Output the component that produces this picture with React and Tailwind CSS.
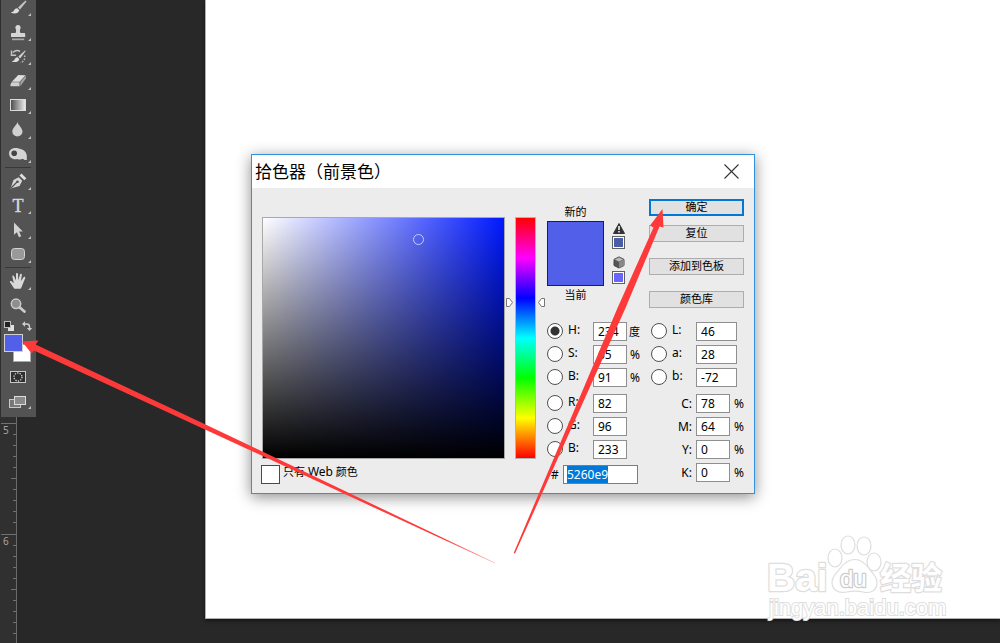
import React, { useEffect, useRef, useState } from 'react';

const brushTools = [
  {
    name: 'Brush',
    draw: (
      <>
        <path d="M16.5 1.5 9 8.5l2 2L17.500 2.500z" fill="#c4c4c4" />
        <path d="M8.300 9.200c-2 0-2.800 1-3.300 2.400-.5 1.100-1.600 1.600-3.300 1.600 3 2 7.600 1.600 8.600-2z" fill="#dedede" />
      </>
    ),
  },
  {
    name: 'Clone Stamp',
    draw: (
      <>
        <path d="M9 1a2.600 2.600 0 0 1 2.300 3.900c-.6 1.100-.6 2.500.2 4.100H15c.8 0 1.200.5 1.200 1.200V13H2v-2.800C2 9.500 2.400 9 3.100 9h3.400c.8-1.600.8-3 .2-4.100A2.600 2.600 0 0 1 9 1z" fill="#d6d6d6" />
        <path d="M3 14.500h12.200v1.700H3z" fill="#a9a9a9" />
      </>
    ),
  },
  {
    name: 'History Brush',
    draw: (
      <>
        <path d="M16 2.500 9.300 8.600l1.800 1.800L16.700 3z" fill="#d0d0d0" />
        <path d="M8.700 9.300c-2 .1-2.600 1.200-3.100 2.300-.5 1-1.600 1.500-3 1.600 2.800 1.600 6.900 1 7.700-2z" fill="#dedede" />
        <path d="M4 4.500C6 2.500 9 2.300 11 3.500M2.500 2.500v4.800h4.600" fill="none" stroke="#c4c4c4" strokeWidth="1.500" />
        <path d="M15.500 7.500c1 3-.5 6-4 7.300" fill="none" stroke="#bdbdbd" strokeWidth="1.500" strokeDasharray="1.500 1.500" />
      </>
    ),
  },
  {
    name: 'Eraser',
    draw: (
      <>
        <path d="m9.300 3 7.200.2-5.800 6.600-7.900-.1z" fill="#dedede" />
        <path d="M2.500 10.300h8v4H2.300c-.8 0-1-.5-1-1.200z" fill="#cfcfcf" />
        <path d="m11.300 10 5.600-6.400v3l-5.600 7.600z" fill="#a2a2a2" />
      </>
    ),
  },
  {
    name: 'Gradient',
    draw: (
      <>
        <defs>
          <linearGradient id="toolGradient">
            <stop offset="0" stopColor="#4a4a4a" />
            <stop offset="1" stopColor="#f0f0f0" />
          </linearGradient>
        </defs>
        <rect x="1.500" y="2.500" width="15" height="11" fill="url(#toolGradient)" stroke="#dcdcdc" />
      </>
    ),
  },
  {
    name: 'Blur',
    draw: <path d="M8.500 1c.4 2.800 5 6 5 9.600a5 4.800 0 0 1-10.200 0C3.300 7 8 3.800 8.500 1z" fill="#d0d0d0" />,
  },
  {
    name: 'Sponge',
    draw: (
      <>
        <path d="M0 7C.5 3 4 1.500 8 2l4.500 1.200c3.200 1 5 3.300 5.300 6.600v4.200c-1.500.3-3-.3-4-1.200-1.500.8-3.500 1-5.300.2C4 14 0 12 0 7z" fill="#d4d4d4" />
        <circle cx="5.200" cy="7.300" r="2.800" fill="#444444" />
      </>
    ),
  },
];

const pathTools = [
  {
    name: 'Pen',
    draw: (
      <>
        <path d="M1.500 16.500 4.500 8l5.200-2.700 3.500 3.500-2.600 5.100z" fill="#d6d6d6" />
        <path d="m10.500 3.500 2-2 4.800 4.800-2 2z" fill="#dedede" />
        <path d="m2 16 6-6" stroke="#535353" strokeWidth="1.200" />
        <circle cx="8.500" cy="9.800" r="1.300" fill="#535353" />
      </>
    ),
  },
  {
    name: 'Type',
    draw: (
      <text x="9" y="15" textAnchor="middle" fontSize="18" fontFamily="Liberation Serif, serif" fill="#d8d8d8" stroke="#d8d8d8" strokeWidth="0.400">
        T
      </text>
    ),
  },
  {
    name: 'Path Selection',
    draw: <path d="M5 1.500v12.300l2.900-2.600 2 5 2.300-1-2.100-4.700h3.700z" fill="#d2d2d2" />,
  },
  {
    name: 'Rounded Rectangle',
    draw: <rect x="2.500" y="2.500" width="13" height="11" rx="3" fill="#999999" stroke="#d4d4d4" />,
  },
];

const viewTools = [
  {
    name: 'Hand',
    draw: (
      <path
        d="M5.300 16.800 1 10.300c-.6-1.200.8-1.900 1.600-1l2.200 2L3.300 4.600c-.2-1.300 1.400-1.600 1.800-.4L7 8.500V2c0-1.300 1.900-1.300 2 0l.3 6.200L11 2.500c.4-1.200 2.100-.8 1.900.5l-1.100 6.200 2.800-3.900c.7-1 2.200-.2 1.600 1l-2.600 6.200c-.4 1.400-1.200 2.900-2 4.300z"
        fill="#d8d8d8"
      />
    ),
    corner: true,
  },
  {
    name: 'Zoom',
    draw: (
      <>
        <circle cx="7" cy="6.800" r="4.700" fill="#8e8e8e" stroke="#c9c9c9" strokeWidth="1.500" />
        <path d="m10.800 10.500 4.600 4" stroke="#cccccc" strokeWidth="2.800" strokeLinecap="round" />
      </>
    ),
    corner: false,
  },
];

const leftFields = [
  [
    { id: 'h', label: 'H:', value: '234', unit: '度' },
    { id: 's', label: 'S:', value: '65', unit: '%' },
    { id: 'v', label: 'B:', value: '91', unit: '%' },
  ],
  [
    { id: 'r', label: 'R:', value: '82' },
    { id: 'g', label: 'G:', value: '96' },
    { id: 'bl', label: 'B:', value: '233' },
  ],
];

const labFields = [
  { id: 'l', label: 'L:', value: '46' },
  { id: 'a', label: 'a:', value: '28' },
  { id: 'b', label: 'b:', value: '-72' },
];

const cmykFields = [
  { id: 'c', label: 'C:', value: '78' },
  { id: 'm', label: 'M:', value: '64' },
  { id: 'y', label: 'Y:', value: '0' },
  { id: 'k', label: 'K:', value: '0' },
];

const ToolButton = ({ tool, corner = true }) => (
  <button type="button" aria-label={tool.name} className="relative flex items-center justify-center w-full">
    <svg width="18" height="18" viewBox="0 0 18 18" className="overflow-visible">{tool.draw}</svg>
    {corner && (
      <svg width="3" height="3" viewBox="0 0 3 3" className="absolute right-1 bottom-1">
        <path d="M3 0v3H0z" fill="#c0c0c0" />
      </svg>
    )}
  </button>
);

const Toolbar = () => (
  <div className="bg-[#535353] border-l border-[#2e2e2e] overflow-hidden w-[36px] pr-px pb-1">
    <div className="grid auto-rows-fr h-[171px] -mt-1">
      {brushTools.map((tool) => <ToolButton key={tool.name} tool={tool} />)}
    </div>
    <div className="h-px mx-1 bg-[#383838] mb-px" />
    <div className="grid auto-rows-fr h-[98px]">
      {pathTools.map((tool) => <ToolButton key={tool.name} tool={tool} />)}
    </div>
    <div className="h-px mx-1 bg-[#383838] mb-px" />
    <div className="grid auto-rows-fr h-[49px]">
      {viewTools.map((tool) => <ToolButton key={tool.name} tool={tool} corner={tool.corner} />)}
    </div>

    {/* Default / swap colors */}
    <div className="flex gap-2 pl-[3px] h-4 items-center">
      <button type="button" aria-label="Default colors">
        <svg width="10" height="10" viewBox="0 0 10 10">
          <rect x="4" y="4" width="6" height="6" fill="#e0e0e0" />
          <rect x="0.500" y="0.500" width="6" height="6" fill="#222222" stroke="#bdbdbd" />
        </svg>
      </button>
      <button type="button" aria-label="Swap colors">
        <svg width="10" height="10" viewBox="0 0 10 10">
          <path d="M2.500 3h2.300Q7.500 3 7.500 5.700v1.500" fill="none" stroke="#cfcfcf" strokeWidth="1.400" />
          <path d="M0 3 3 .3v5.400zM7.500 10 4.800 7h5.400z" fill="#cfcfcf" />
        </svg>
      </button>
    </div>

    {/* Foreground and background */}
    <div className="grid h-[28px] ml-[3px] mr-1">
      <button type="button" aria-label="Background color" className="col-start-1 row-start-1 justify-self-end self-end w-[18px] h-[18px] bg-white border border-[#aaaaaa]" />
      <button type="button" aria-label="Foreground color" className="col-start-1 row-start-1 w-[19px] h-[18px] z-10 bg-[#5260e9] border border-[#d0d0d0]" />
    </div>

    <button type="button" aria-label="Quick Mask" className="flex items-center justify-center w-full h-[29px]">
      <svg width="18" height="14" viewBox="0 0 18 14">
        <rect x="1.500" y="1.500" width="15" height="11" fill="#303030" stroke="#c8c8c8" />
        <circle cx="9" cy="7" r="4" fill="none" stroke="#d8d8d8" strokeWidth="1.300" strokeDasharray="1.300 1.200" />
      </svg>
    </button>
    <div className="grid h-[22px]">
      <ToolButton
        tool={{
          name: 'Screen Mode',
          draw: (
            <>
              <rect x="0.500" y="6.500" width="11" height="8" fill="#777777" stroke="#c8c8c8" />
              <rect x="5.500" y="3.500" width="11" height="8" fill="#8a8a8a" stroke="#dddddd" />
            </>
          ),
        }}
      />
    </div>
  </div>
);

const Ruler = () => {
  const ticks = Array.from({ length: 22 }, (_, i) => i);
  return (
    <div className="relative flex-1 w-[17px] bg-[#303030] border-r border-[#6a6a6a] overflow-hidden">
      <svg width="16" height="100%" className="absolute inset-0" shapeRendering="crispEdges">
        {ticks.map((i) => (
          <path
            key={i}
            d={`M${i % 10 === 0 ? 1 : i % 5 === 0 ? 11 : 13} ${Math.round(6 + i * 11.05) + 0.5}H16`}
            stroke="#707070"
          />
        ))}
        <text x="3" y="17" fontSize="10" fontFamily="Noto Sans, sans-serif" fill="#a5a5a5">5</text>
        <text x="3" y="128" fontSize="10" fontFamily="Noto Sans, sans-serif" fill="#a5a5a5">6</text>
      </svg>
    </div>
  );
};

const Radio = ({ id, checked, onChange }) => (
  <input
    type="radio"
    name="channel"
    id={`radio-${id}`}
    aria-label={id}
    checked={checked}
    onChange={onChange}
    className="appearance-none shrink-0 w-4 h-4 mb-[2px] rounded-full border border-[#505050] bg-white checked:bg-[radial-gradient(circle,#333_4px,#fff_5px)]"
  />
);

const NumberBox = ({ id, value, width }) => (
  <input
    type="text"
    id={id}
    defaultValue={value}
    className={`${width} h-[19px] pl-1 bg-white border border-[#8f8f8f] outline-none`}
  />
);

const DialogButton = ({ children, primary }) => (
  <button
    type="button"
    className={`w-[95px] h-[17px] flex items-center justify-center text-[11px] bg-[#e1e1e1] ${
      primary ? 'border-2 border-[#0078d7]' : 'border border-[#adadad]'
    }`}
  >
    {children}
  </button>
);

const ColorPickerDialog = () => {
  const [channel, setChannel] = useState('h');
  const hexRef = useRef(null);

  useEffect(() => {
    hexRef.current.focus();
    hexRef.current.select();
  }, []);

  return (
    <div
      role="dialog"
      aria-labelledby="picker-title"
      className="w-max bg-[#ececec] border border-[#3291dc] shadow-[0_3px_14px_rgba(0,0,0,0.45)] text-black"
    >
      <div className="flex items-center justify-between h-[33px] bg-white pl-[3px] pr-[15px]">
        <h1 id="picker-title" className="text-[17px] leading-6">拾色器（前景色）</h1>
        <button type="button" aria-label="Close">
          <svg width="15" height="15" viewBox="0 0 15 15">
            <path d="m.5.5 14 14m0-14-14 14" stroke="#333333" strokeWidth="1.100" />
          </svg>
        </button>
      </div>

      <div className="flex px-[10px] pb-[9px]">
        {/* Color field and hue bar */}
        <div className="pt-[29px]">
          <div className="flex">
            <div className="relative w-[243px] h-[242px] border border-[#a8a8a8] bg-[linear-gradient(to_top,#000,transparent),linear-gradient(to_right,#fff,#0019ff)]">
              <span className="absolute left-[150px] top-4 w-[11px] h-[11px] rounded-full border border-[#c6caff]" />
            </div>
            <div className="relative ml-[10px] w-[21px] h-[242px] border border-[#b4b4b4] bg-[linear-gradient(to_bottom,#f00,#f0f,#00f,#0ff,#0f0,#ff0,#f00)]">
              <svg width="39" height="9" viewBox="0 0 39 9" className="absolute -left-[10px] top-[80px] max-w-none">
                <path d="M.5.5h3l3 4-3 4h-3zM38.500.5h-3l-3 4 3 4h3z" fill="#ffffff" stroke="#777777" />
              </svg>
            </div>
          </div>
          <div className="flex items-center mt-[5px] -ml-px">
            <input type="checkbox" id="web-only" className="appearance-none w-[19px] h-[19px] bg-white border border-[#4a4a4a] checked:bg-[#0078d7]" />
            <label htmlFor="web-only" className="ml-[3px] text-[11px] leading-4 pb-1">只有 <span className="text-[12px]">Web</span> 颜色</label>
          </div>
        </div>

        <div className="ml-[11px] pt-[11px]">
          <div className="flex h-[110px]">
            <div className="flex flex-col items-center w-[57px] text-[11px] leading-4 pt-[5px]">
              <span>新的</span>
              <div className="w-[57px] h-[65px] bg-[#5260e9] border border-[#222222] my-px" />
              <span>当前</span>
            </div>
            <div className="flex flex-col items-center w-[13px] ml-2 pt-6">
              <svg width="12" height="11" viewBox="0 0 12 11">
                <path d="M6 .5 11.500 10.500H.5z" fill="#333333" stroke="#333333" strokeLinejoin="round" />
                <path d="M6 3v4M6 8v1.500" stroke="#ffffff" strokeWidth="1.500" />
              </svg>
              <button type="button" aria-label="Gamut color" className="w-[13px] h-[13px] mt-[2px] bg-[#4a5da8] border border-[#606060] outline outline-white -outline-offset-2" />
              <svg width="12" height="13" viewBox="0 0 12 13" className="mt-[7px]">
                <path d="M6 1 11 3.500v6L6 12 1 9.500v-6z" fill="#555555" stroke="#444444" />
                <path d="M6 1 11 3.500 6 6 1 3.500z" fill="#bbbbbb" stroke="#555555" strokeWidth="0.700" />
                <path d="M6 6v6l5-2.500v-6z" fill="#888888" />
              </svg>
              <button type="button" aria-label="Web safe color" className="w-[13px] h-[13px] mt-[2px] bg-[#6666ff] border border-[#606060] outline outline-white -outline-offset-2" />
            </div>
            <div className="flex flex-col ml-6">
              <DialogButton primary>确定</DialogButton>
              <div className="flex flex-col mt-[9px] gap-4">
                <DialogButton>复位</DialogButton>
                <DialogButton>添加到色板</DialogButton>
                <DialogButton>颜色库</DialogButton>
              </div>
            </div>
          </div>

          <div className="flex mt-[13px] text-[12px] leading-4">
            <div className="flex flex-col gap-[7px]">
              {leftFields.map((group, i) => (
                <div key={i} className="flex flex-col gap-1">
                  {group.map((field) => (
                    <div key={field.id} className="flex items-center h-[19px]">
                      <Radio id={field.id} checked={channel === field.id} onChange={() => setChannel(field.id)} />
                      <label htmlFor={`field-${field.id}`} className="w-[25px] ml-[5px] pb-[3px]">{field.label}</label>
                      <NumberBox id={`field-${field.id}`} value={field.value} width="w-[34px]" />
                      {field.unit && (
                        <span className={field.unit === '%' ? 'ml-[3px]' : 'ml-[2px] text-[11px]'}>{field.unit}</span>
                      )}
                    </div>
                  ))}
                </div>
              ))}
              <div className="flex items-center pl-1 -mt-px">
                <label htmlFor="hex" className="w-3">#</label>
                <input
                  ref={hexRef}
                  id="hex"
                  type="text"
                  defaultValue="5260e9"
                  className="w-[75px] h-[19px] pl-[3px] bg-white border border-[#2f8fe0] outline-none selection:bg-[#0078d7] selection:text-white"
                />
              </div>
            </div>

            <div className="flex flex-col gap-[7px] ml-auto">
              <div className="flex flex-col gap-1">
                {labFields.map((field) => (
                  <div key={field.id} className="flex items-center h-[19px]">
                    <Radio id={field.id} checked={channel === field.id} onChange={() => setChannel(field.id)} />
                    <label htmlFor={`field-${field.id}`} className="w-[29px] pl-[5px] pb-[3px]">{field.label}</label>
                    <NumberBox id={`field-${field.id}`} value={field.value} width="w-[41px]" />
                  </div>
                ))}
              </div>
              <div className="flex flex-col gap-1">
                {cmykFields.map((field) => (
                  <div key={field.id} className="flex items-center h-[19px]">
                    <label htmlFor={`field-${field.id}`} className="w-[45px] pr-1 text-right">{field.label}</label>
                    <NumberBox id={`field-${field.id}`} value={field.value} width="w-[34px]" />
                    <span className="ml-1">%</span>
                  </div>
                ))}
              </div>
            </div>
          </div>
        </div>
      </div>
    </div>
  );
};

const Watermark = () => (
  <svg width="184" height="92" viewBox="0 0 184 92" className="absolute right-[52px] bottom-[17px]" aria-label="Baidu">
    <g fill="#ffffff" stroke="#dedede" strokeWidth="1.200">
      <ellipse cx="71" cy="24" rx="7" ry="9" />
      <ellipse cx="84" cy="11" rx="7" ry="9" />
      <ellipse cx="100" cy="12" rx="7" ry="9" />
      <ellipse cx="110" cy="28" rx="7" ry="9" />
      <path d="M91 25.500c7 0 11 5 14 9 4 6 8 8 8 14 0 9-8 11-14 9.500-5-1-11-1-16 0-7 1.500-15-1-15-9.500 0-6 4-8 8-14 3-4 8-9 15-9z" />
      <g paintOrder="stroke" strokeWidth="2.500" strokeLinejoin="round" fontFamily="Liberation Sans, Noto Sans CJK SC, sans-serif" fontWeight="700">
        <text x="3" y="57" fontSize="39">Bai</text>
        <text x="76" y="53" fontSize="24" fontWeight="400" stroke="#cccccc">du</text>
        <text x="116" y="55" fontSize="31">经验</text>
      </g>
      <text x="5" y="81" fontSize="22" fontFamily="Liberation Sans, sans-serif" paintOrder="stroke" strokeWidth="2">
        jingyan.baidu.com
      </text>
    </g>
  </svg>
);

const Arrows = () => (
  <svg width="1000" height="643" viewBox="0 0 1000 643" className="absolute left-0 top-0 z-20 pointer-events-none max-w-none">
    <defs>
      <linearGradient id="tailFade" gradientUnits="userSpaceOnUse" x1="440" y1="540" x2="495" y2="563">
        <stop offset="0" stopColor="#fd3a39" />
        <stop offset="1" stopColor="#fd3a39" stopOpacity="0.450" />
      </linearGradient>
    </defs>
    <path d="M22 341.500 38.500 340.500l-3 4L205 424.200l290 138.500-.2.600L205 429.500 34 350.500l-2.500 3z" fill="url(#tailFade)" />
    <path d="m662.500 209 1 18.500-4-1L625.500 308 515 553.500l-1.300-.6L617.500 308l36-80.500-3.500-2z" fill="#fd3a39" />
  </svg>
);

export default function App() {
  return (
    <div className="relative flex min-h-screen overflow-hidden bg-[#282828] font-['Noto_Sans','Noto_Sans_CJK_SC',sans-serif]">
      <aside className="flex flex-col w-[205px] shrink-0">
        <Toolbar />
        <Ruler />
      </aside>

      <main className="flex-1 flex pb-6">
        <div className="flex-1 bg-white pt-[154px] pl-[45px] border-l border-b border-[#b0b0b0] shadow-[0_2px_4px_rgba(0,0,0,0.5)]">
          <ColorPickerDialog />
        </div>
      </main>

      <Watermark />
      <Arrows />
    </div>
  );
}
